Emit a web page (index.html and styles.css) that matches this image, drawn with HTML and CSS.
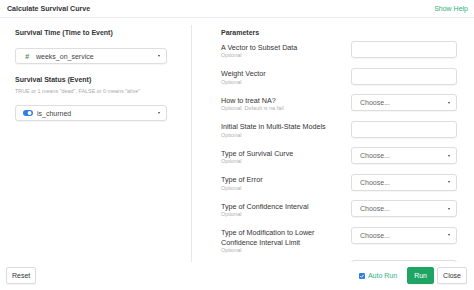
FILE: index.html
```html
<!DOCTYPE html>
<html lang="en">

<head>
    <link rel="stylesheet" href="styles.css">
</head>

<body>
    <div class="dialog">
        <header class="dialog-header">
            <span class="dialog-title">Calculate Survival Curve</span>
            <span class="help-link">Show Help</span>
        </header>

        <div class="dialog-body">
            <!-- Required columns -->
            <section class="column-left">
                <div class="section-title">Survival Time (Time to Event)</div>
                <div class="select-box col-select">
                    <span class="type-num">#</span>
                    <span class="select-value">weeks_on_service</span>
                    <span class="caret"></span>
                </div>

                <div class="section-title status-title">Survival Status (Event)</div>
                <div class="section-desc">TRUE or 1 means "dead", FALSE or 0 means "alive"</div>
                <div class="select-box col-select">
                    <svg class="type-bool" width="10" height="6" viewBox="0 0 10 6">
                        <rect x="0" y="0" width="10" height="6" rx="3" fill="#2f80e4"></rect>
                        <circle cx="6.6" cy="3" r="1.9" fill="#fff"></circle>
                    </svg>
                    <span class="select-value">is_churned</span>
                    <span class="caret"></span>
                </div>
            </section>

            <!-- Optional parameters -->
            <section class="column-right">
                <div class="section-title params-title">Parameters</div>

                <div class="param-row">
                    <div class="param-label">
                        <div class="param-name">A Vector to Subset Data</div>
                        <div class="param-note">Optional</div>
                    </div>
                    <div class="text-input"></div>
                </div>

                <div class="param-row">
                    <div class="param-label">
                        <div class="param-name">Weight Vector</div>
                        <div class="param-note">Optional</div>
                    </div>
                    <div class="text-input"></div>
                </div>

                <div class="param-row">
                    <div class="param-label">
                        <div class="param-name">How to treat NA?</div>
                        <div class="param-note">Optional: Default is na.fail</div>
                    </div>
                    <div class="select-box param-select"><span class="placeholder">Choose...</span><span class="caret"></span></div>
                </div>

                <div class="param-row">
                    <div class="param-label">
                        <div class="param-name">Initial State in Multi-State Models</div>
                        <div class="param-note">Optional</div>
                    </div>
                    <div class="text-input"></div>
                </div>

                <div class="param-row">
                    <div class="param-label">
                        <div class="param-name">Type of Survival Curve</div>
                        <div class="param-note">Optional</div>
                    </div>
                    <div class="select-box param-select"><span class="placeholder">Choose...</span><span class="caret"></span></div>
                </div>

                <div class="param-row">
                    <div class="param-label">
                        <div class="param-name">Type of Error</div>
                        <div class="param-note">Optional</div>
                    </div>
                    <div class="select-box param-select"><span class="placeholder">Choose...</span><span class="caret"></span></div>
                </div>

                <div class="param-row">
                    <div class="param-label">
                        <div class="param-name">Type of Confidence Interval</div>
                        <div class="param-note">Optional</div>
                    </div>
                    <div class="select-box param-select"><span class="placeholder">Choose...</span><span class="caret"></span></div>
                </div>

                <div class="param-row row-tall">
                    <div class="param-label">
                        <div class="param-name">Type of Modification to Lower Confidence Interval Limit</div>
                        <div class="param-note">Optional</div>
                    </div>
                    <div class="select-box param-select"><span class="placeholder">Choose...</span><span class="caret"></span></div>
                </div>

                <!-- next row, scrolled below the fold -->
                <div class="param-row">
                    <div class="param-label"></div>
                    <div class="text-input"></div>
                </div>
            </section>
        </div>

        <footer class="dialog-footer">
            <button class="btn">Reset</button>
            <div class="footer-right">
                <label class="auto-run">
                    <svg class="check" width="6" height="6" viewBox="0 0 6 6">
                        <rect x="0" y="0" width="6" height="6" rx="1" fill="#2f7ee0"></rect>
                        <path d="M1.3 3.1 L2.5 4.3 L4.8 1.7" stroke="#fff" stroke-width="0.9" fill="none"></path>
                    </svg>
                    Auto Run
                </label>
                <button class="btn btn-run">Run</button>
                <button class="btn">Close</button>
            </div>
        </footer>
    </div>
</body>

</html>
```

FILE: styles.css
```css
body {
    margin: 0;
    font-family: "Liberation Sans", Arial, sans-serif;
    color: #333;
    background: #fff;
    overflow: hidden;
}

.dialog {
    width: 474px;
    height: 290px;
    display: flex;
    flex-direction: column;
}

.dialog-header {
    height: 17px;
    border-bottom: 1px solid #ececec;
    display: flex;
    align-items: center;
    justify-content: space-between;
    padding: 0 6px 0 7px;
    flex-shrink: 0;
}

.dialog-title {
    font-size: 7.1px;
    font-weight: bold;
    color: #333;
}

.help-link {
    font-size: 7px;
    color: #2fb27a;
}

.dialog-body {
    height: 244px;
    display: flex;
    overflow: hidden;
    flex-shrink: 0;
}

.column-left {
    width: 191px;
    box-sizing: border-box;
    padding: 10px 24px 0 15px;
}

.section-title {
    font-size: 7px;
    font-weight: bold;
    line-height: 10px;
    color: #333;
}

.status-title {
    margin-top: 11px;
}

.section-desc {
    font-size: 5.4px;
    line-height: 7px;
    color: #aaa;
    margin: 3px 0 7px;
    white-space: nowrap;
}

.select-box {
    box-sizing: border-box;
    border: 1px solid #dedede;
    border-radius: 3px;
    background: #fff;
    box-shadow: 0 1px 1px rgba(0, 0, 0, 0.04);
    display: flex;
    align-items: center;
    font-size: 7px;
    position: relative;
}

.col-select {
    height: 16px;
    margin-top: 10px;
    padding-left: 9px;
}

.type-num {
    color: #3d9c45;
    font-weight: bold;
    font-style: italic;
    width: 11px;
    font-size: 7.5px;
}

.type-bool {
    margin-right: 4px;
    margin-left: -2px;
}

.select-value {
    color: #444;
}

.caret {
    position: absolute;
    right: 6px;
    top: 50%;
    margin-top: -1px;
    width: 0;
    height: 0;
    border-left: 1.8px solid transparent;
    border-right: 1.8px solid transparent;
    border-top: 2.4px solid #444;
}

.column-right {
    flex: 1;
    border-left: 1px solid #e8e8e8;
    margin: 7px 0 6px;
    padding: 3px 17px 0 29px;
    height: 300px;
}

.params-title {
    margin-bottom: 3px;
}

.param-row {
    display: flex;
    align-items: flex-start;
    margin-bottom: 9px;
}

.row-tall {
    margin-bottom: 6px;
}

.param-label {
    width: 130px;
    padding-top: 1.5px;
    padding-right: 12px;
    box-sizing: border-box;
}

.param-name {
    font-size: 7.2px;
    line-height: 9.5px;
    color: #333;
}

.param-note {
    font-size: 5.5px;
    line-height: 6.5px;
    color: #b0b0b0;
}

.text-input,
.param-select {
    width: 106px;
    height: 17px;
    flex-shrink: 0;
    box-sizing: border-box;
}

.text-input {
    border: 1px solid #dedede;
    border-radius: 3px;
    background: #fff;
    box-shadow: 0 1px 1px rgba(0, 0, 0, 0.04);
}

.param-select {
    padding-left: 8px;
}

.placeholder {
    color: #666;
}

.dialog-footer {
    flex: 1;
    display: flex;
    align-items: center;
    justify-content: space-between;
    padding: 0 7px 1px 6px;
}

.footer-right {
    display: flex;
    align-items: center;
    gap: 3px;
}

.auto-run {
    display: flex;
    align-items: center;
    gap: 3px;
    font-size: 7px;
    color: #2fb27a;
    margin-right: 7px;
}

.btn {
    font-family: "Liberation Sans", Arial, sans-serif;
    font-size: 7px;
    height: 17px;
    padding: 0 5px;
    border: 1px solid #dcdcdc;
    border-radius: 2px;
    background: #fff;
    color: #333;
    box-shadow: 0 1px 1px rgba(0, 0, 0, 0.05);
}

.btn-run {
    background: #1ea564;
    border-color: #1ea564;
    color: #fff;
    width: 27px;
}
```
